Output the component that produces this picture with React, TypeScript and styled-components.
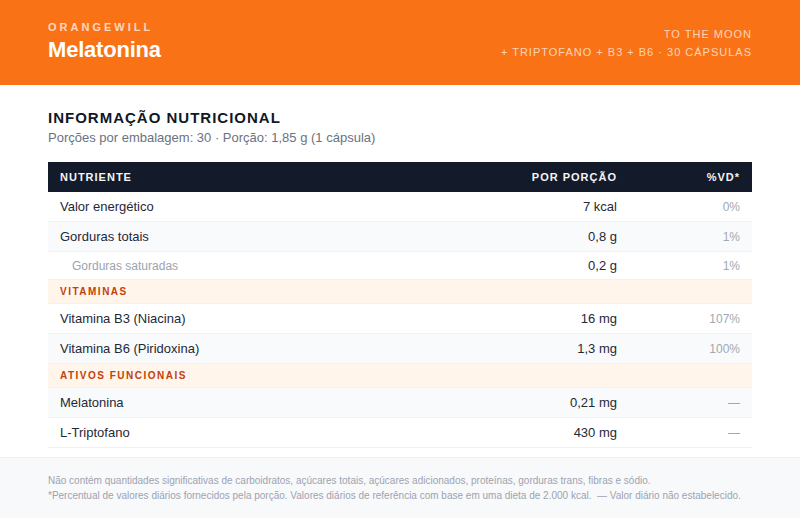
import { createGlobalStyle } from "styled-components";
import styled from "styled-components";

const GlobalStyle = createGlobalStyle`
  html, body {
    margin: 0;
    padding: 0;
    background: #ffffff;
    font-family: "Liberation Sans", Arial, sans-serif;
  }
`;

const Page = styled.div`
  width: 800px;
  height: 518px;
  display: flex;
  flex-direction: column;
  overflow: hidden;
`;

const Header = styled.header`
  flex-shrink: 0;
  height: 85px;
  background: #f97316;
  padding: 0 48px;
  box-sizing: border-box;
  display: flex;
  align-items: center;
  justify-content: space-between;
`;

const Brand = styled.div`
  display: flex;
  flex-direction: column;
  gap: 4px;
  margin-top: -2px;
`;

const BrandName = styled.div`
  font-size: 11px;
  font-weight: 700;
  letter-spacing: 3px;
  color: rgba(255, 255, 255, 0.72);
`;

const ProductName = styled.h1`
  margin: 0;
  font-size: 22px;
  line-height: 26px;
  font-weight: 700;
  letter-spacing: -0.2px;
  color: #ffffff;
`;

const Tagline = styled.div`
  text-align: right;
  font-size: 11px;
  line-height: 18px;
  letter-spacing: 1px;
  color: rgba(255, 255, 255, 0.7);
`;

const Content = styled.main`
  padding: 24px 48px 0;
  flex: 1;
`;

const Heading = styled.h2`
  margin: 0;
  font-size: 15px;
  line-height: 18px;
  font-weight: 700;
  letter-spacing: 1px;
  color: #111827;
`;

const Subheading = styled.p`
  margin: 2px 0 0;
  font-size: 13px;
  line-height: 18px;
  color: #6b7280;
`;

const Table = styled.div`
  margin-top: 15px;
  display: flex;
  flex-direction: column;
`;

const Row = styled.div<{ $striped?: boolean; $compact?: boolean }>`
  display: grid;
  grid-template-columns: 1fr 160px 123px;
  align-items: center;
  height: ${(p) => (p.$compact ? "28px" : "30px")};
  box-sizing: border-box;
  border-bottom: 1px solid #f1f2f4;
  background: ${(p) => (p.$striped ? "#f9fafb" : "#ffffff")};
`;

const HeadRow = styled.div`
  display: grid;
  grid-template-columns: 1fr 160px 123px;
  align-items: center;
  height: 30px;
  background: #131a2a;
`;

const HeadCell = styled.div<{ $right?: boolean }>`
  padding: 0 12px;
  font-size: 11px;
  font-weight: 700;
  letter-spacing: 1px;
  color: #f3f4f6;
  text-align: ${(p) => (p.$right ? "right" : "left")};
`;

const NameCell = styled.div<{ $sub?: boolean }>`
  padding: 0 12px 0 ${(p) => (p.$sub ? "24px" : "12px")};
  font-size: ${(p) => (p.$sub ? "12px" : "13px")};
  color: ${(p) => (p.$sub ? "#9ca3af" : "#1f2937")};
`;

const AmountCell = styled.div`
  padding: 0 12px;
  text-align: right;
  font-size: 13px;
  color: #1f2937;
`;

const PercentCell = styled.div`
  padding: 0 12px;
  text-align: right;
  font-size: 12px;
  color: #a3a8b2;
`;

const CategoryRow = styled.div`
  height: 24px;
  box-sizing: border-box;
  display: flex;
  align-items: center;
  padding: 0 12px;
  background: #fff5eb;
  border-bottom: 1px solid #fbeee2;
  font-size: 10px;
  font-weight: 700;
  letter-spacing: 1.5px;
  color: #c2410c;
`;

const Footer = styled.footer`
  flex-shrink: 0;
  background: #f8f9fb;
  border-top: 1px solid #eef0f3;
  padding: 15px 48px 15px;
  font-size: 10px;
  line-height: 15px;
  color: #9ca3af;
`;

type Item =
  | { kind: "cat"; label: string }
  | { kind: "row"; name: string; amount: string; vd: string; sub?: boolean };

const items: Item[] = [
  { kind: "row", name: "Valor energético", amount: "7 kcal", vd: "0%" },
  { kind: "row", name: "Gorduras totais", amount: "0,8 g", vd: "1%" },
  { kind: "row", name: "Gorduras saturadas", amount: "0,2 g", vd: "1%", sub: true },
  { kind: "cat", label: "VITAMINAS" },
  { kind: "row", name: "Vitamina B3 (Niacina)", amount: "16 mg", vd: "107%" },
  { kind: "row", name: "Vitamina B6 (Piridoxina)", amount: "1,3 mg", vd: "100%" },
  { kind: "cat", label: "ATIVOS FUNCIONAIS" },
  { kind: "row", name: "Melatonina", amount: "0,21 mg", vd: "—" },
  { kind: "row", name: "L-Triptofano", amount: "430 mg", vd: "—" },
];

export default function App() {
  return (
    <Page>
      <GlobalStyle />
      <Header>
        <Brand>
          <BrandName>ORANGEWILL</BrandName>
          <ProductName>Melatonina</ProductName>
        </Brand>
        <Tagline>
          TO THE MOON
          <br />+ TRIPTOFANO + B3 + B6 · 30 CÁPSULAS
        </Tagline>
      </Header>
      <Content>
        <Heading>INFORMAÇÃO NUTRICIONAL</Heading>
        <Subheading>Porções por embalagem: 30 · Porção: 1,85 g (1 cápsula)</Subheading>
        <Table>
          <HeadRow>
            <HeadCell>NUTRIENTE</HeadCell>
            <HeadCell $right>POR PORÇÃO</HeadCell>
            <HeadCell $right>%VD*</HeadCell>
          </HeadRow>
          {items.map((item, i) =>
            item.kind === "cat" ? (
              <CategoryRow key={item.label}>{item.label}</CategoryRow>
            ) : (
              <Row key={item.name} $striped={i % 2 === 1} $compact={item.sub}>
                <NameCell $sub={item.sub}>{item.name}</NameCell>
                <AmountCell>{item.amount}</AmountCell>
                <PercentCell>{item.vd}</PercentCell>
              </Row>
            )
          )}
        </Table>
      </Content>
      <Footer>
        Não contém quantidades significativas de carboidratos, açúcares totais, açúcares adicionados, proteínas, gorduras trans, fibras e sódio.
        <br />
        *Percentual de valores diários fornecidos pela porção. Valores diários de referência com base em uma dieta de 2.000 kcal.&nbsp; — Valor diário não estabelecido.
      </Footer>
    </Page>
  );
}
